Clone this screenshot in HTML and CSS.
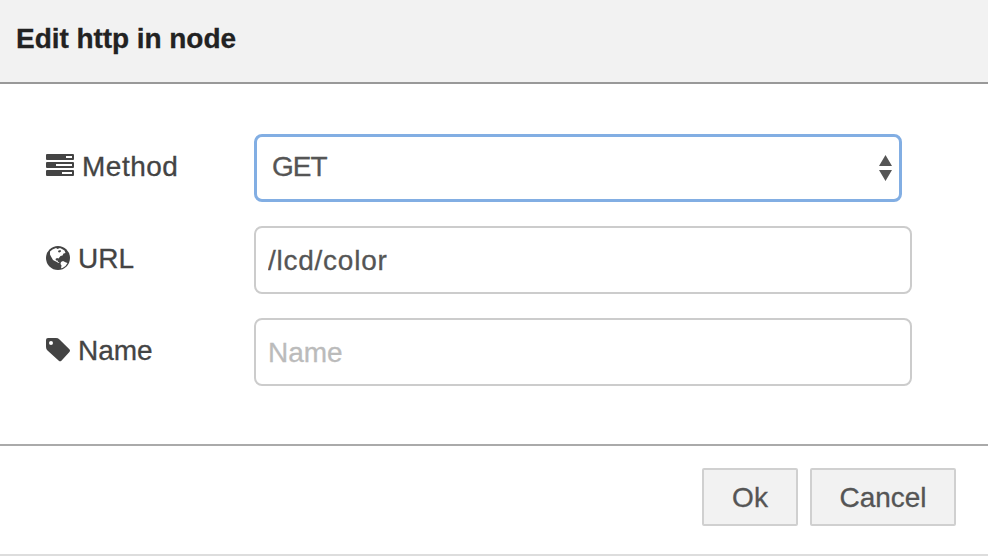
FILE: index.html
```html
<!DOCTYPE html>
<html lang="en">
<head>
<meta charset="utf-8">
<title>Edit http in node</title>
<link rel="stylesheet" href="styles.css">
</head>
<body>
<main class="dialog">
  <header class="titlebar"><h1>Edit http in node</h1></header>
  <form class="content">
    <div class="row">
      <label class="label method" for="method"><svg class="icon tasks" width="28" height="22" viewBox="0 0 28 22"><g fill="#444"><rect width="28" height="6" rx="1"/><rect y="8" width="28" height="6" rx="1"/><rect y="16" width="28" height="6" rx="1"/></g><path fill="#fff" d="M20 2h6v2h-6zM10 10h16v2H10zM16 18h10v2H16z"/></svg><span>Method</span></label>
      <div class="select-wrap"><select id="method" class="field select"><option>GET</option></select><svg class="arrows" width="13" height="26" viewBox="0 0 13 26"><path fill="#555" d="M6.500 0 13 11H0zM0 15h13L6.500 26z"/></svg></div>
    </div>
    <div class="row">
      <label class="label" for="url"><svg class="icon" width="24" height="24" viewBox="0 0 24 24"><circle cx="12" cy="12" r="12" fill="#444"/><path fill="#fff" d="M6.500 3.500 10 2l1.500 1L14 2l2 1 2.500 1.500 1 2.500-2 .5-1 2-2 .5-2 2.500-1.500-.5-1.500 1 .5 1.500h1.500l.5 1.500 1.500.5-1 .5-2.500-1.500-3-1.500-2-3.500-1-2 0-3zM15 16l2-1 3 1.500 1.500.5-2 3-3 2-1.500.3.5-2.800-1-1.500z"/><path fill="#444" d="m12.500 4.500 2-.5.5 1.500-1.500 1-1.500-.5z"/></svg><span>URL</span></label>
      <input id="url" class="field url" type="text" value="/lcd/color">
    </div>
    <div class="row">
      <label class="label" for="name"><svg class="icon" width="24" height="24" viewBox="0 0 24 24"><path fill="#444" fill-rule="evenodd" d="M0 2Q0 0 2 0h8q2 0 3.500 1.400l9.900 9.900q1.200 1.300 0 2.600l-8 8.900q-1.300 1.100-2.600 0L1.500 12.500Q0 11 0 9zM5 3a2 2 0 1 0 0 4 2 2 0 0 0 0-4z"/></svg><span>Name</span></label>
      <input id="name" class="field" type="text" placeholder="Name">
    </div>
  </form>
  <footer class="actions"><button class="ok" type="button">Ok</button><button class="cancel" type="button">Cancel</button></footer>
</main>
</body>
</html>
```
FILE: styles.css
```css
* { box-sizing: border-box; }
body { margin: 0; background: #fff; font: 28px/40px "Liberation Sans", Arial, sans-serif; color: #444; -webkit-text-stroke: .3px; }
.dialog { height: 556px; display: flex; flex-direction: column; border-bottom: 2px solid #ddd; }
.titlebar { height: 84px; padding: 19px 16px 17px; background: #f2f2f2; border-bottom: 2px solid #999; }
h1 { margin: 0; font-size: 28px; line-height: 40px; letter-spacing: -.05px; color: #222; }
.content { height: 360px; padding: 50px 76px 0 46px; display: flex; flex-direction: column; gap: 24px; }
.row { display: flex; height: 68px; }
.label { width: 208px; height: 60px; display: flex; align-items: center; gap: 8px; padding-top: 4px; }
.label span { padding-top: 2px; }
.method span { letter-spacing: .5px; }
.icon { display: block; flex: none; }
.tasks { margin-top: -2px; }
.field { display: block; width: 658px; height: 68px; margin: 0; padding: 2px 12px 0; border: 2px solid #ccc; border-radius: 8px; background: #fff; color: #555; font: inherit; outline: 0; }
.field::placeholder { color: #bbb; opacity: 1; }
.url { letter-spacing: .75px; }
.select-wrap { position: relative; width: 648px; }
.select { appearance: none; width: 648px; height: 68px; padding: 0 15px 2px; border: 3px solid #82aee3; letter-spacing: -1px; }
.arrows { position: absolute; right: 10px; top: 21px; }
.actions { flex: 1; display: flex; justify-content: flex-end; gap: 12px; padding: 22px 32px 0; border-top: 2px solid #aaa; }
button { height: 58px; padding: 2px 0 0; border: 2px solid #d0d0d0; border-radius: 2px; background: #f2f2f2; color: #555; font: inherit; }
.ok { width: 96px; }
.cancel { width: 146px; }
```
